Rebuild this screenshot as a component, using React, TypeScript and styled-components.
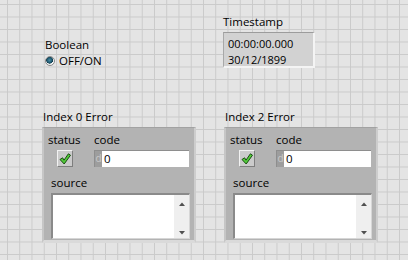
import styled, { createGlobalStyle } from "styled-components";

const GlobalStyle = createGlobalStyle`
  html, body {
    margin: 0;
    padding: 0;
  }
  body {
    width: 408px;
    height: 260px;
    overflow: hidden;
    background-color: #e4e4e4;
    background-image:
      linear-gradient(to right, #cacaca 1px, transparent 1px),
      linear-gradient(to bottom, #cacaca 1px, transparent 1px);
    background-size: 12.25px 12.5px;
    background-position: 7px 4px;
    font-family: "Open Sans", "Noto Sans", sans-serif;
    font-size: 11.5px;
    line-height: 15px;
    color: #000;
  }
`;

const Panel = styled.div`
  display: grid;
  grid-template-columns: 182px 1fr;
  row-gap: 41px;
  padding: 14px 0 0 42px;
`;

const Control = styled.div<{ $dx?: number }>`
  display: flex;
  flex-direction: column;
  align-self: end;
  margin-left: ${(p) => p.$dx ?? 0}px;
`;

const Label = styled.div<{ $gap?: number; $dx?: number }>`
  white-space: nowrap;
  margin-bottom: ${(p) => p.$gap ?? 0}px;
  margin-left: ${(p) => p.$dx ?? 0}px;
`;

const RadioRow = styled.div`
  display: flex;
  align-items: center;
  gap: 4px;
  margin-top: 1px;
`;

const Radio = styled.span`
  width: 10px;
  height: 10px;
  box-sizing: border-box;
  border-radius: 50%;
  border: 1px solid #8a8a8a;
  background: radial-gradient(circle at 45% 40%, #4d8fa6 0, #1d5870 2.5px, #0f3a4c 3.2px, #f4f4f4 3.6px);
`;

const TimeBox = styled.div`
  width: 92px;
  height: 36px;
  box-sizing: border-box;
  padding: 3px 0 0 4px;
  background: #d2d2d2;
  border-top: 1px solid #9c9c9c;
  border-left: 1px solid #a8a8a8;
  border-right: 2px solid #f4f4f4;
  border-bottom: 2px solid #f4f4f4;
  font-size: 11px;
  line-height: 16px;
`;

const Cluster = styled.div`
  width: 154px;
  height: 116px;
  box-sizing: border-box;
  padding: 4px 5px 0 4px;
  background: #b3b3b3;
  border-top: 1px solid #a2a2a2;
  border-left: 2px solid #c6c6c6;
  border-right: 2px solid #cdcdcd;
  border-bottom: 3px solid #dadada;
  display: flex;
  flex-direction: column;
`;

const TopRow = styled.div`
  display: flex;
`;

const StatusCol = styled.div`
  width: 47px;
  display: flex;
  flex-direction: column;
  align-items: flex-start;
`;

const CodeCol = styled.div`
  display: flex;
  flex-direction: column;
`;

const CheckButton = styled.div`
  width: 16px;
  height: 17px;
  box-sizing: border-box;
  margin-left: 9px;
  background: #cbcbcb;
  border-top: 1px solid #f2f2f2;
  border-left: 1px solid #f2f2f2;
  border-right: 1px solid #7e7e7e;
  border-bottom: 1px solid #7e7e7e;
  display: flex;
  align-items: center;
  justify-content: center;
`;

const NumField = styled.div`
  width: 95px;
  height: 17px;
  box-sizing: border-box;
  display: flex;
  background: #fff;
  border-top: 1px solid #8e8e8e;
  border-left: 1px solid #8e8e8e;
`;

const Radix = styled.span`
  width: 7px;
  background: #9d9d9d;
  color: #c9c9c9;
  font-size: 10px;
  line-height: 15px;
  text-align: center;
`;

const NumValue = styled.span`
  padding-left: 2px;
  line-height: 15px;
`;

const SourceLabel = styled.div`
  margin: 8px 0 3px 3px;
`;

const StringBox = styled.div`
  width: 139px;
  height: 46px;
  box-sizing: border-box;
  margin-left: 3px;
  display: flex;
  background: #fff;
  border-top: 2px solid #8a8a8a;
  border-left: 2px solid #8a8a8a;
  border-right: 1px solid #d6d6d6;
  border-bottom: 1px solid #d6d6d6;
`;

const StringArea = styled.div`
  flex: 1;
`;

const ScrollBar = styled.div`
  width: 15px;
  background: #efefef;
  display: flex;
  flex-direction: column;
  justify-content: space-between;
  align-items: center;
  padding: 7px 0 3px;
`;

const Arrow = ({ up }: { up?: boolean }) => (
  <svg width="6" height="4" viewBox="0 0 6 4">
    <polygon points={up ? "0,4 3,0.5 6,4" : "0,0 3,3.5 6,0"} fill="#505050" />
  </svg>
);

const CheckMark = () => (
  <svg width="12" height="12" viewBox="0 0 12 12">
    <polygon
      points="1,6.5 3.6,4.8 5,7.2 9.4,0.8 11.5,2.2 5.2,11"
      fill="#52cc3a"
      stroke="#1c4d14"
      strokeWidth="1"
      strokeLinejoin="round"
    />
  </svg>
);

const ErrorCluster = ({ title }: { title: string }) => (
  <Control>
    <Label $gap={3} $dx={1}>
      {title}
    </Label>
    <Cluster>
      <TopRow>
        <StatusCol>
          <Label $gap={3}>status</Label>
          <CheckButton>
            <CheckMark />
          </CheckButton>
        </StatusCol>
        <CodeCol>
          <Label $gap={3}>code</Label>
          <NumField>
            <Radix>d</Radix>
            <NumValue>0</NumValue>
          </NumField>
        </CodeCol>
      </TopRow>
      <SourceLabel>source</SourceLabel>
      <StringBox>
        <StringArea />
        <ScrollBar>
          <Arrow up />
          <Arrow />
        </ScrollBar>
      </StringBox>
    </Cluster>
  </Control>
);

export default function App() {
  return (
    <>
      <GlobalStyle />
      <Panel>
        <Control $dx={3}>
          <Label>Boolean</Label>
          <RadioRow>
            <Radio />
            <span>OFF/ON</span>
          </RadioRow>
        </Control>
        <Control $dx={-1}>
          <Label $gap={3}>Timestamp</Label>
          <TimeBox>
            <div>00:00:00.000</div>
            <div>30/12/1899</div>
          </TimeBox>
        </Control>
        <ErrorCluster title="Index 0 Error" />
        <ErrorCluster title="Index 2 Error" />
      </Panel>
    </>
  );
}
